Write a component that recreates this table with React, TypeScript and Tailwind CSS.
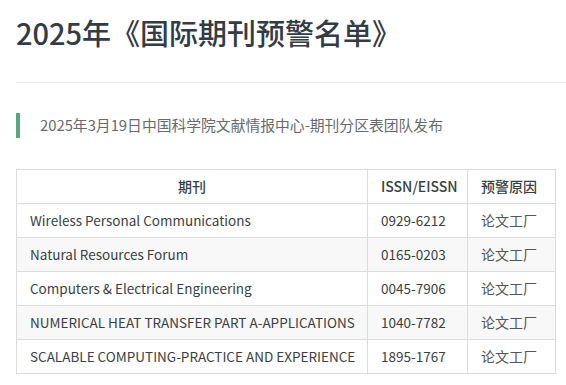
const rows = [
  { name: "Wireless Personal Communications", issn: "0929-6212", reason: "论文工厂" },
  { name: "Natural Resources Forum", issn: "0165-0203", reason: "论文工厂" },
  { name: "Computers & Electrical Engineering", issn: "0045-7906", reason: "论文工厂" },
  { name: "NUMERICAL HEAT TRANSFER PART A-APPLICATIONS", issn: "1040-7782", reason: "论文工厂" },
  { name: "SCALABLE COMPUTING-PRACTICE AND EXPERIENCE", issn: "1895-1767", reason: "论文工厂" },
];

export default function App() {
  return (
    <div
      className="h-[385px] w-[566px] overflow-hidden bg-white"
      style={{ fontFamily: '"Noto Sans CJK SC", "Noto Sans", sans-serif' }}
    >
      <div className="pl-[16px]">
        <h1 className="pt-[12px] text-[29px] font-medium leading-[40px] text-[#333b45]">
          2025年《国际期刊预警名单》
        </h1>
        <div className="mt-[30px] h-px bg-[#e8e8e8]" />

        <div className="mt-[30px] flex h-[25px] items-center">
          <span className="h-full w-[4px] bg-[#56a97f]" />
          <p className="ml-[20px] text-[14.8px] text-[#666a6e]">
            2025年3月19日中国科学院文献情报中心-期刊分区表团队发布
          </p>
        </div>

        <table className="mt-[31px] w-[539px] table-fixed border-collapse text-[13.5px] text-[#3a3f45]">
          <colgroup>
            <col className="w-[351px]" />
            <col className="w-[100px]" />
            <col className="w-[88px]" />
          </colgroup>
          <thead>
            <tr className="h-[34px]">
              <th className="border border-[#dcdcdc] text-center text-[14px] font-medium">期刊</th>
              <th className="border border-[#dcdcdc] px-[13px] text-left text-[14px] font-medium">ISSN/EISSN</th>
              <th className="border border-[#dcdcdc] px-[13px] text-left text-[14px] font-medium">预警原因</th>
            </tr>
          </thead>
          <tbody>
            {rows.map((row, i) => (
              <tr key={row.issn} className={i % 2 === 1 ? "h-[34px] bg-[#f8f8f8]" : "h-[34px] bg-white"}>
                <td className="whitespace-nowrap border border-[#dcdcdc] px-[13px]">{row.name}</td>
                <td className="border border-[#dcdcdc] px-[13px]">{row.issn}</td>
                <td className="border border-[#dcdcdc] px-[13px] text-[14px] text-[#555]">{row.reason}</td>
              </tr>
            ))}
          </tbody>
        </table>
      </div>
    </div>
  );
}
